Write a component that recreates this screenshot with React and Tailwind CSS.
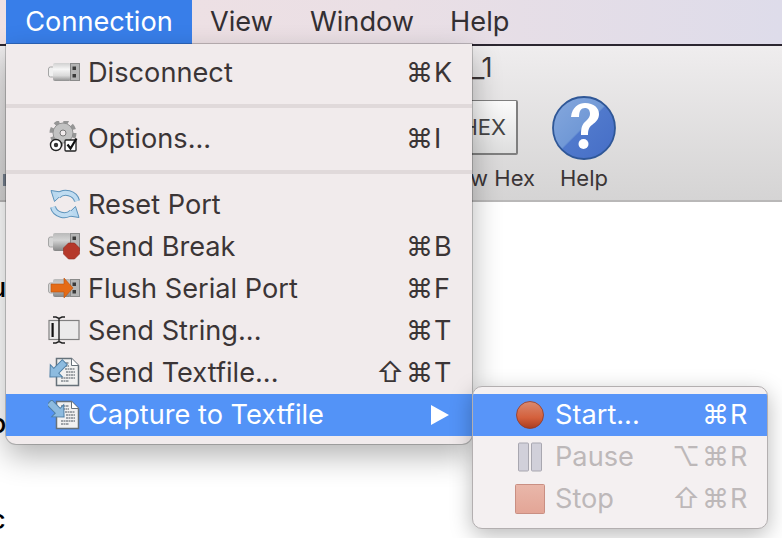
const sans = "font-['Inter','Liberation_Sans',sans-serif]"

function UsbBody({ dim, y = 0 }) {
  return (
    <g transform={`translate(0 ${y})`}>
      <rect x="0.500" y="5" width="6" height="10" rx="2" fill={dim ? '#d6d6d6' : '#f0f0f0'} stroke="#a5a5a5" />
      <rect x="5" y="1" width="18" height="18" rx="2" fill={dim ? 'url(#stickDim)' : 'url(#stick)'} />
      <rect x="22" y="1" width="10" height="18" fill="#8a8a8a" />
      <rect x="23" y="2" width="8" height="16" fill="#b4b4b4" />
      <rect x="24.500" y="4.500" width="3.500" height="3.500" fill="#3a3a3a" />
      <rect x="24.500" y="12" width="3.500" height="3.500" fill="#3a3a3a" />
    </g>
  )
}

function Defs() {
  return (
    <svg width="0" height="0" className="absolute">
      <defs>
        <linearGradient id="stick" x1="0" y1="0" x2="0" y2="1">
          <stop offset="0" stopColor="#d0d0d0" />
          <stop offset="0.35" stopColor="#f6f6f6" />
          <stop offset="0.7" stopColor="#dadada" />
          <stop offset="1" stopColor="#8f8f8f" />
        </linearGradient>
        <linearGradient id="stickDim" x1="0" y1="0" x2="0" y2="1">
          <stop offset="0" stopColor="#b9b9b9" />
          <stop offset="0.4" stopColor="#d4d4d4" />
          <stop offset="1" stopColor="#858585" />
        </linearGradient>
        <linearGradient id="stop" x1="0" y1="0" x2="0" y2="1">
          <stop offset="0" stopColor="#e9b7aa" />
          <stop offset="1" stopColor="#e3a596" />
        </linearGradient>
        <linearGradient id="record" x1="0" y1="0" x2="0" y2="1">
          <stop offset="0" stopColor="#d98a70" />
          <stop offset="0.6" stopColor="#d4603c" />
          <stop offset="1" stopColor="#a93c20" />
        </linearGradient>
        <linearGradient id="helpBall" x1="0" y1="0" x2="1" y2="1">
          <stop offset="0" stopColor="#86a8de" />
          <stop offset="0.48" stopColor="#7199d6" />
          <stop offset="0.5" stopColor="#5079cc" />
          <stop offset="1" stopColor="#456dc6" />
        </linearGradient>
      </defs>
    </svg>
  )
}

function DocArrow({ incoming }) {
  return (
    <svg width="32" height="30" viewBox="0 0 32 30">
      <path d="M8.500 1.500h15l7 7v20h-22z" fill="#f1f1f1" stroke="#66717a" strokeWidth="1.500" />
      <path d="M23.500 1.500v7h7" fill="#fff" stroke="#66717a" />
      <path d="M13 6h8M15 9h6M17 12h10M18 15h9M18 18h9M13 21h14M13 24h8" stroke="#4b555e" strokeWidth="1" strokeDasharray="2 0.500" />
      <g transform={incoming ? 'translate(9 10) rotate(45)' : 'translate(9 13) rotate(135)'}>
        <path d="M-11-3.500H1V-8.500L10 0 1 8.500V3.500H-11z" fill="#8dbbdf" stroke="#4f7fa6" strokeWidth="1" />
      </g>
    </svg>
  )
}

const icons = {
  usb: (
    <svg width="32" height="20" viewBox="0 0 32 20">
      <UsbBody />
    </svg>
  ),
  gear: (
    <svg width="32" height="34" viewBox="0 -3 32 34">
      <circle cx="15" cy="9" r="11.500" fill="none" stroke="#969696" strokeWidth="4" strokeDasharray="5 4.030" />
      <circle cx="15" cy="9" r="10" fill="#c2c2c2" stroke="#8f8f8f" />
      <circle cx="15" cy="9" r="3" fill="#f1ebec" stroke="#777" />
      <circle cx="8" cy="21" r="5.500" fill="#fff" stroke="#222" strokeWidth="1.400" />
      <circle cx="8" cy="21" r="2.200" fill="#333" />
      <rect x="17" y="16" width="11" height="11" rx="1" fill="#fff" stroke="#222" strokeWidth="1.300" />
      <path d="M19.500 20.500l3 4 6-10" fill="none" stroke="#111" strokeWidth="2.200" />
    </svg>
  ),
  reset: (
    <svg width="30" height="30" viewBox="0 0 30 30">
      {[0, 180].map((angle) => (
        <g key={angle} transform={`rotate(${angle} 15 15)`}>
          <path d="M27 12C25 4 14 1 8 7" fill="none" stroke="#5d93bb" strokeWidth="6" />
          <path d="M1 1.500l13 2-9.500 9z" fill="#b9d8ef" stroke="#5d93bb" />
          <path d="M27 12C25 4 14 1 8 7" fill="none" stroke="#c0dcf1" strokeWidth="4" />
        </g>
      ))}
    </svg>
  ),
  sendBreak: (
    <svg width="32" height="28" viewBox="0 0 32 28">
      <UsbBody dim />
      <path d="M20.500 11h6l5 5v6l-5 5h-6l-5-5v-6z" fill="#b5382a" stroke="#8f2a20" strokeWidth="0.600" />
    </svg>
  ),
  flush: (
    <svg width="32" height="22" viewBox="0 0 32 22">
      <UsbBody dim y="1" />
      <path d="M3 7h13V1l9 10-9 10v-6H3z" fill="#e56b16" stroke="#b9500d" strokeWidth="0.600" />
    </svg>
  ),
  sendString: (
    <svg width="32" height="28" viewBox="0 0 32 28">
      <rect x="1" y="4.500" width="30" height="19" fill="#ebebeb" stroke="#808080" strokeWidth="1.200" />
      <rect x="3.500" y="7" width="2.200" height="14" fill="#111" />
      <path d="M5 1h3l3 1.500L14 1h3M11 2.500v23M5 27h3l3-1.500L14 27h3" fill="none" stroke="#222" strokeWidth="1.400" />
    </svg>
  ),
  sendFile: <DocArrow />,
  captureFile: <DocArrow incoming />,
}

const mainGroups = [
  [{ icon: 'usb', label: 'Disconnect', mods: '⌘', key_: 'K' }],
  [{ icon: 'gear', label: 'Options...', mods: '⌘', key_: 'I' }],
  [
    { icon: 'reset', label: 'Reset Port' },
    { icon: 'sendBreak', label: 'Send Break', mods: '⌘', key_: 'B' },
    { icon: 'flush', label: 'Flush Serial Port', mods: '⌘', key_: 'F' },
    { icon: 'sendString', label: 'Send String...', mods: '⌘', key_: 'T' },
    { icon: 'sendFile', label: 'Send Textfile...', mods: '⇧⌘', key_: 'T' },
  ],
]

function Shortcut({ mods, letter, className }) {
  return (
    <span className={`flex items-center justify-end text-[27px] ${className}`}>
      <span className="-mr-[4px] tracking-[2px]">{mods}</span>
      <span className="w-[22px] pl-[3px] text-left">{letter}</span>
    </span>
  )
}

function MenuRow({ item }) {
  return (
    <div className="flex h-[42px] items-center pr-[19px] text-[#3b3536]">
      <span className="flex w-[82px] shrink-0 justify-end pr-[8px]">{icons[item.icon]}</span>
      <span className="flex-1 pt-[2px] text-[27.2px] whitespace-nowrap">{item.label}</span>
      {item.mods && <Shortcut mods={item.mods} letter={item.key_} className="pt-[2px]" />}
    </div>
  )
}

function SubRow({ icon, label, mods, letter, active }) {
  return (
    <div
      className={`flex h-[42px] items-center pr-[18px] ${
        active ? 'bg-[#5895f9] text-white' : 'text-[#bdb8b9]'
      }`}
    >
      <span className="flex w-[82px] shrink-0 justify-end pr-[10px]">{icon}</span>
      <span className="flex-1 pt-[1px] text-[27.2px]">{label}</span>
      <Shortcut mods={mods} letter={letter} className="pt-[1px]" />
    </div>
  )
}

export default function App() {
  return (
    <div className={`relative h-[538px] w-[782px] overflow-hidden bg-white ${sans}`}>
      <Defs />

      {/* menu bar */}
      <div className="flex h-[44px] items-center bg-gradient-to-r from-[#f0e1e3] via-[#eadfe5] to-[#dedcea] pl-[6px] text-[27.2px] text-[#332f33]">
        <div className="flex h-full w-[186px] items-center justify-center bg-[#387ee9] pt-[1px] text-white">Connection</div>
        <div className="ml-[18px] pt-[1px]">View</div>
        <div className="ml-[37px] pt-[1px]">Window</div>
        <div className="ml-[36px] pt-[1px]">Help</div>
      </div>

      {/* window chrome behind the menu */}
      <div className="relative h-[158px] border-t-2 border-b-2 border-t-[#2b2630] border-b-[#b9b8b8] bg-gradient-to-b from-[#efedee] to-[#d5d4d4]">
        <div className="absolute top-[128px] left-[3px] h-[12px] w-[3px] bg-[#75808f]" />
        <div className="pt-[4px] pl-[472px] text-[27px] leading-[36px] text-[#3b3536]">_1</div>
        <div className="flex pt-[14px] pl-[430px]">
          <div className="flex w-[105px] flex-col items-end">
            <div className="mr-[17px] flex h-[55px] w-[88px] items-center justify-end rounded-[2px] border border-r-2 border-b-2 border-[#7f7f7f] bg-gradient-to-b from-[#fbfbfb] to-[#dedede] pr-[10px] text-[22px] text-[#444]">
              HEX
            </div>
            <div className="mt-[9px] text-[22px] leading-[28px] text-[#3b3536]">View Hex</div>
          </div>
          <div className="ml-[17px] flex w-[64px] flex-col items-center">
            <svg width="64" height="64" viewBox="0 0 64 64" className="-mt-[4px]">
              <circle cx="32" cy="32" r="31" fill="url(#helpBall)" stroke="#2f5797" strokeWidth="1.800" />
              <path
                d="M19 21C20 11 27 7 33 7c9 0 14 5 14 11 0 5-3 8-7 11-3 2-4 5-4 10h-7c0-7 1-11 5-14 3-3 4-5 4-7 0-4-2-6-5-6-4 0-6 3-6 9z"
                fill="#fff"
              />
              <circle cx="31.500" cy="48" r="5" fill="#fff" />
            </svg>
            <div className="mt-[4px] text-[22px] leading-[28px] text-[#3b3536]">Help</div>
          </div>
        </div>
      </div>

      {/* clipped document text at the left edge */}
      <div className="-ml-[10px] flex flex-col text-[27px] leading-[30px] font-medium text-black">
        <span className="mt-[71px]">u</span>
        <span className="mt-[106px]">o</span>
        <span className="mt-[66px]">c</span>
      </div>

      {/* connection menu */}
      <div className="absolute top-[44px] left-[6px] w-[466px] rounded-b-[10px] bg-[#f1ebec] pt-[7px] pb-[8px] shadow-[0_0_0_1px_rgba(0,0,0,0.2),0_12px_30px_rgba(0,0,0,0.3)]">
        {mainGroups.map((group, i) => (
          <div key={i}>
            {i > 0 && <div className="mt-[11px] mb-[9px] h-[4px] bg-[#e0d9da]" />}
            {group.map((item) => (
              <MenuRow key={item.label} item={item} />
            ))}
          </div>
        ))}
        <div className="mt-[1px] flex h-[42px] items-center bg-[#5393f7] pr-[23px] text-white">
          <span className="flex w-[82px] shrink-0 justify-end pr-[8px]">{icons.captureFile}</span>
          <span className="flex-1 pt-[1px] text-[27.2px]">Capture to Textfile</span>
          <svg width="18" height="20" viewBox="0 0 18 20">
            <path d="M0 0l18 10L0 20z" fill="#fff" />
          </svg>
        </div>
      </div>

      {/* capture submenu */}
      <div className="absolute top-[386px] left-[472px] w-[296px] overflow-hidden rounded-[10px] border border-[#b3afb0] bg-[#f4f0f1] pt-[7px] pb-[8px] shadow-[0_6px_22px_rgba(0,0,0,0.28)]">
        <SubRow
          active
          label="Start..."
          mods="⌘"
          letter="R"
          icon={
            <svg width="30" height="30" viewBox="0 0 30 30">
              <circle cx="15" cy="15" r="13.500" fill="url(#record)" stroke="#8f3a28" strokeWidth="0.800" />
            </svg>
          }
        />
        <SubRow
          label="Pause"
          mods="⌥⌘"
          letter="R"
          icon={
            <svg width="30" height="30" viewBox="0 0 30 30">
              <rect x="3.500" y="1" width="10" height="28" rx="1" fill="#d1d0da" stroke="#a8a7b0" />
              <rect x="16.500" y="1" width="10" height="28" rx="1" fill="#d1d0da" stroke="#a8a7b0" />
            </svg>
          }
        />
        <SubRow
          label="Stop"
          mods="⇧⌘"
          letter="R"
          icon={
            <svg width="30" height="30" viewBox="0 0 30 30">
              <rect x="0.500" y="0.500" width="29" height="29" rx="1" fill="url(#stop)" stroke="#c98f83" />
            </svg>
          }
        />
      </div>
    </div>
  )
}
